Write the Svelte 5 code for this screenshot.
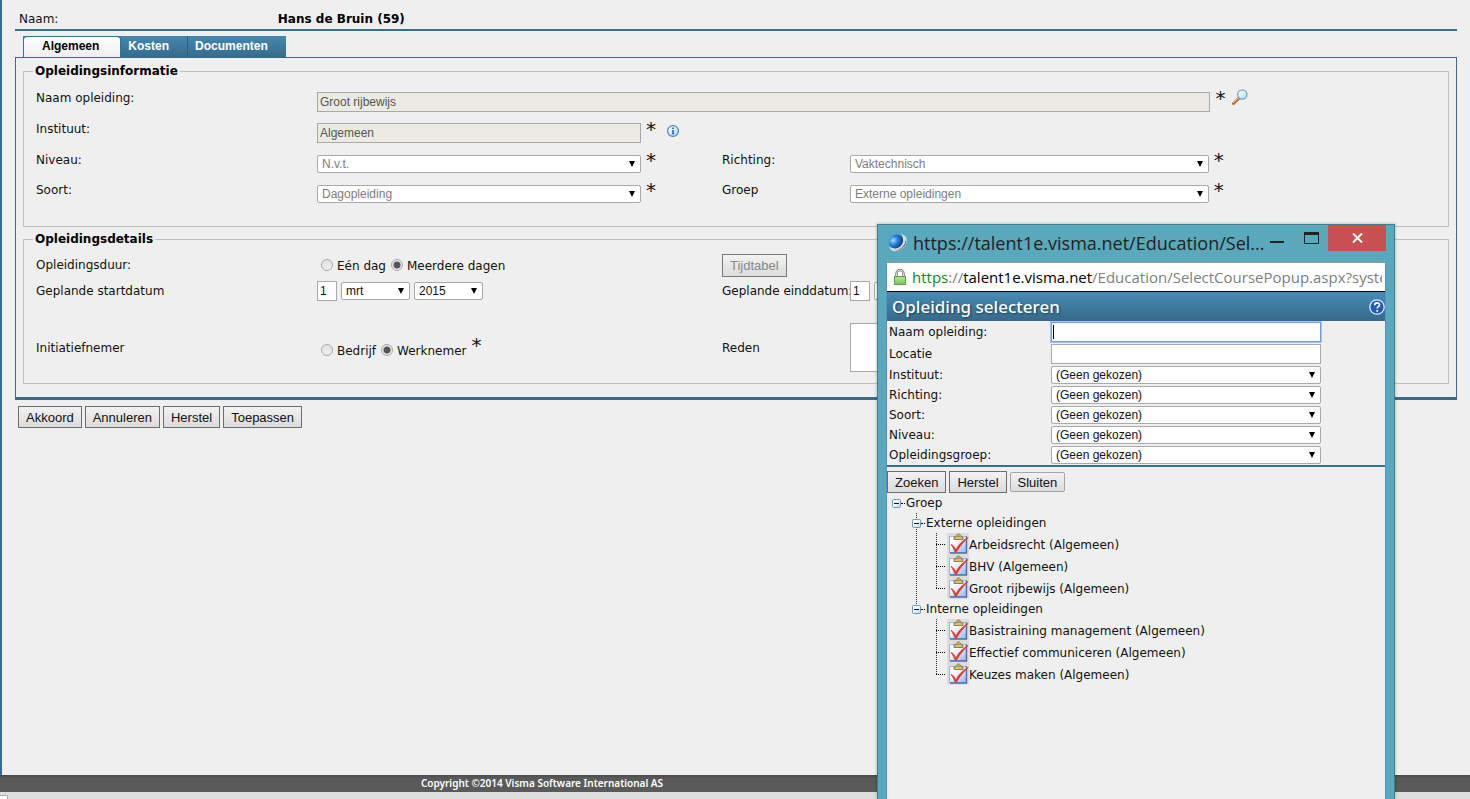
<script lang="ts">
  const tabs = ['Algemeen', 'Kosten', 'Documenten'];
  const filters = ['Instituut:', 'Richting:', 'Soort:', 'Niveau:', 'Opleidingsgroep:'];
  const groups = [
    { name: 'Externe opleidingen', items: ['Arbeidsrecht', 'BHV', 'Groot rijbewijs'] },
    { name: 'Interne opleidingen', items: ['Basistraining management', 'Effectief communiceren', 'Keuzes maken'] }
  ];

  let activeTab = 'Algemeen';
  let duration = 'meerdere';
  let initiator = 'werknemer';
  let open = true;
  let closed: Record<string, boolean> = {};

  function toggle(name: string) {
    closed = { ...closed, [name]: !closed[name] };
  }
</script>

{#snippet dropdown(id: string, value: string, label: string, disabled: boolean)}
  <span class="select">
    <select {id} {disabled} aria-label={label}>
      <option>{value}</option>
    </select>
  </span>
{/snippet}

{#snippet toggleIcon(collapsed: boolean)}
  <svg width="9" height="9" viewBox="0 0 9 9" aria-hidden="true">
    <rect x="0.5" y="0.5" width="8" height="8" rx="1" fill="url(#box)" stroke="#6f97c4" />
    <path d={collapsed ? 'M2 4.5h5M4.5 2v5' : 'M2 4.5h5'} stroke="#111" />
  </svg>
{/snippet}

<div class="page">
  <main>
    <header class="person">
      <span>Naam:</span>
      <strong>Hans de Bruin (59)</strong>
    </header>

    <nav class="tabs">
      {#each tabs as tab}
        <button type="button" class="tab" class:active={tab === activeTab} on:click={() => (activeTab = tab)}>{tab}</button>
      {/each}
    </nav>

    <section class="panel">
      <fieldset>
        <legend>Opleidingsinformatie</legend>
        <div class="grid info">
          <label for="course">Naam opleiding:</label>
          <div class="field wide">
            <input id="course" class="text" value="Groot rijbewijs" readonly />
            <span class="star">*</span>
            <button type="button" class="icon" aria-label="Opleiding zoeken">
              <svg width="16" height="16" viewBox="0 0 16 16">
                <path d="M1.5 14.5 7 9" stroke="#b8692f" stroke-width="3" stroke-linecap="round" />
                <path d="M1.3 13.6 6.3 8.8" stroke="#f6bf7c" stroke-width="1.2" stroke-linecap="round" />
                <circle cx="10.3" cy="5.5" r="4.6" fill="url(#lens)" stroke="#7d9fd3" stroke-width="1.3" />
              </svg>
            </button>
          </div>

          <label for="institute">Instituut:</label>
          <div class="field">
            <input id="institute" class="text" value="Algemeen" readonly />
            <span class="star">*</span>
            <button type="button" class="icon info-button" aria-label="Informatie">
              <svg width="12" height="12" viewBox="0 0 12 12">
                <circle cx="6" cy="6" r="5.4" fill="url(#lens)" stroke="#4483cc" stroke-width="1.2" />
                <path d="M6 2.4v1.6M6 5v4" fill="none" stroke="#3972b8" stroke-width="1.8" />
                <path d="M4.8 9h2.4" stroke="#3972b8" stroke-width="0.8" />
              </svg>
            </button>
          </div>

          <label class="first" for="level">Niveau:</label>
          <div class="field">{@render dropdown('level', 'N.v.t.', 'Niveau', true)}<span class="star">*</span></div>
          <label for="direction">Richting:</label>
          <div class="field right">{@render dropdown('direction', 'Vaktechnisch', 'Richting', true)}<span class="star">*</span></div>

          <label for="kind">Soort:</label>
          <div class="field">{@render dropdown('kind', 'Dagopleiding', 'Soort', true)}<span class="star">*</span></div>
          <label for="group">Groep</label>
          <div class="field right">{@render dropdown('group', 'Externe opleidingen', 'Groep', true)}<span class="star">*</span></div>
        </div>
      </fieldset>

      <fieldset>
        <legend>Opleidingsdetails</legend>
        <div class="grid details">
          <span>Opleidingsduur:</span>
          <div class="radios">
            <label><input type="radio" bind:group={duration} value="een" />Eén dag</label>
            <label><input type="radio" bind:group={duration} value="meerdere" />Meerdere dagen</label>
          </div>
          <div class="span"><button type="button" class="btn" disabled>Tijdtabel</button></div>

          <label for="start-day">Geplande startdatum</label>
          <div class="date">
            <input id="start-day" class="text" value="1" />
            {@render dropdown('start-month', 'mrt', 'Startmaand', false)}
            {@render dropdown('start-year', '2015', 'Startjaar', false)}
          </div>
          <label for="end-day">Geplande einddatum:</label>
          <div class="date">
            <input id="end-day" class="text" value="1" />
            {@render dropdown('end-month', 'mrt', 'Eindmaand', false)}
            {@render dropdown('end-year', '2015', 'Eindjaar', false)}
          </div>

          <span class="mid">Initiatiefnemer</span>
          <div class="radios mid">
            <label><input type="radio" bind:group={initiator} value="bedrijf" />Bedrijf</label>
            <label><input type="radio" bind:group={initiator} value="werknemer" />Werknemer</label>
            <span class="star">*</span>
          </div>
          <label class="mid" for="reason">Reden</label>
          <textarea id="reason"></textarea>
        </div>
      </fieldset>
    </section>

    <div class="actions">
      <button type="button" class="btn">Akkoord</button>
      <button type="button" class="btn">Annuleren</button>
      <button type="button" class="btn">Herstel</button>
      <button type="button" class="btn">Toepassen</button>
    </div>
  </main>

  <footer>Copyright ©2014 Visma Software International AS</footer>
  <div class="strip"><span></span></div>

  <!-- popup window -->
  <aside class="window">
    <div class="titlebar">
      <svg width="20" height="20" viewBox="0 0 20 20" aria-hidden="true">
        <path d="M13 1c5 1 7 5 5 10-2 5-8 8-13 7-2-1-3-2-4-4 5 2 10 1 13-4 2-4 1-7-1-9z" fill="#d3dbe0" />
        <path d="M18 6c1 6-4 12-12 12 7-1 11-5 12-12z" fill="#47616f" />
        <ellipse cx="8" cy="8.500" rx="7.5" ry="6.5" transform="rotate(-40 8 8.500)" fill="url(#globe)" />
      </svg>
      <span class="caption">https://talent1e.visma.net/Education/Sel...</span>
      <button type="button" class="win" aria-label="Minimaliseren">
        <svg width="15" height="12" viewBox="0 0 15 12"><path d="M0 10h14" stroke="#222" stroke-width="2" /></svg>
      </button>
      <button type="button" class="win" aria-label="Maximaliseren">
        <svg width="15" height="12" viewBox="0 0 15 12"><path d="M0.5 1v10.5h14V1" fill="none" stroke="#222" /><path d="M0 1.5h15" stroke="#222" stroke-width="3" /></svg>
      </button>
      <button type="button" class="win close" aria-label="Sluiten">
        <svg width="11" height="10" viewBox="0 0 11 10"><path d="M1 0.5l9 9M10 0.5l-9 9" stroke="#fff" stroke-width="2" /></svg>
      </button>
    </div>

    <div class="content">
      <div class="address">
        <svg width="12" height="16" viewBox="0 0 12 16" aria-hidden="true">
          <path d="M2.5 8V4.5a3.5 3.5 0 0 1 7 0V8" fill="none" stroke="#777" stroke-width="2.4" />
          <path d="M2.5 8V4.5a3.5 3.5 0 0 1 7 0V8" fill="none" stroke="#ddd" stroke-width="1" />
          <rect x="0.5" y="7.5" width="11" height="8" fill="url(#lock)" stroke="#5a9e42" />
        </svg>
        <span class="url"><b>https</b>://<i>talent1e.visma.net</i>/Education/SelectCoursePopup.aspx?system</span>
      </div>

      <div class="heading">
        <h1>Opleiding selecteren</h1>
        <button type="button" class="icon" aria-label="Help">
          <svg width="16" height="16" viewBox="0 0 16 16">
            <circle cx="8" cy="8" r="7.2" fill="#2259b5" stroke="#dfe9f5" stroke-width="1.3" />
            <path d="M5.7 6.2c0-3 4.8-3 4.8-.3 0 1.8-2.3 1.7-2.3 3.6M8.2 11v1.8" fill="none" stroke="#fff" stroke-width="1.7" />
          </svg>
        </button>
      </div>

      <form class="search">
        <label for="q-name">Naam opleiding:</label>
        <input id="q-name" class="text current" />
        <label for="q-place">Locatie</label>
        <input id="q-place" class="text" />
        {#each filters as filter, i}
          <label for="filter-{i}">{filter}</label>
          {@render dropdown(`filter-${i}`, '(Geen gekozen)', filter, false)}
        {/each}
      </form>

      <div class="buttons">
        <button type="button" class="btn">Zoeken</button>
        <button type="button" class="btn">Herstel</button>
        <button type="button" class="btn light">Sluiten</button>
      </div>

      <div class="tree">
        <button type="button" class="node" on:click={() => (open = !open)}>{@render toggleIcon(!open)}<span class="dash"></span>Groep</button>
        {#if open}
          <ul class="groups">
            {#each groups as group}
              <li>
                <button type="button" class="node" on:click={() => toggle(group.name)}>{@render toggleIcon(closed[group.name])}<span class="dash"></span>{group.name}</button>
                {#if !closed[group.name]}
                  <ul class="leaves">
                    {#each group.items as item}
                      <li class="leaf">
                        <span class="branch"><span></span></span>
                        <svg width="22" height="22" viewBox="0 0 22 22" aria-hidden="true">
                          <rect width="22" height="22" fill="#dedcd8" />
                          <rect x="2.5" y="3.5" width="17" height="16" fill="url(#sheet)" stroke="#9db6e2" />
                          <path d="M19.5 3.500v16.500H3" fill="none" stroke="#4a6fb5" stroke-width="1.4" />
                          <path d="M7 6.5V4h2c0-4 5-4 5 0h2v2.500z" fill="#d9c27c" stroke="#85713a" stroke-width="0.9" />
                          <path d="M10.5 3.200h2" stroke="#6b5a2c" />
                          <path d="M4 11.500c2.200.6 3.600 2.700 4.800 5.700C11.500 12 15 8 21 4.500 16.500 9 13 13 9.500 19H8C7 16 5.500 13.500 4 11.500z" fill="#dc3a2a" stroke="#dc3a2a" stroke-width="0.800" />
                        </svg>
                        <a href="#top">{item} (Algemeen)</a>
                      </li>
                    {/each}
                  </ul>
                {/if}
              </li>
            {/each}
          </ul>
        {/if}
      </div>
    </div>
  </aside>

  <svg class="defs" width="0" height="0" aria-hidden="true">
    <defs>
      <linearGradient id="box" x1="0" y1="0" x2="1" y2="1"><stop offset="0.3" stop-color="#fff" /><stop offset="1" stop-color="#c3d3e6" /></linearGradient>
      <linearGradient id="lens" x1="0" y1="0" x2="1" y2="1"><stop offset="0.2" stop-color="#f4fbff" /><stop offset="1" stop-color="#a4dcf7" /></linearGradient>
      <linearGradient id="sheet" x1="0" y1="0" x2="1" y2="1"><stop offset="0.3" stop-color="#fff" /><stop offset="1" stop-color="#8fb2ee" /></linearGradient>
      <linearGradient id="lock" x1="0" y1="0" x2="0" y2="1"><stop offset="0" stop-color="#b5e39a" /><stop offset="1" stop-color="#7fc65c" /></linearGradient>
      <radialGradient id="globe" cx="0.4" cy="0.3" r="0.8"><stop offset="0" stop-color="#a9dcff" /><stop offset="0.4" stop-color="#2583dc" /><stop offset="1" stop-color="#0a2a63" /></radialGradient>
    </defs>
  </svg>
</div>

<style>
  :global(body) { background: #efefef; }

  .page {
    position: relative; display: flex; flex-direction: column; min-height: 100vh; overflow: hidden;
    font-family: 'DejaVu Sans', Verdana, sans-serif; font-size: 12px; line-height: 20px; color: #111;
  }
  .page *, .page *::before, .page *::after { box-sizing: border-box; }
  button, input, select, textarea { margin: 0; font-family: 'Liberation Sans', Arial, sans-serif; font-size: 12px; }
  button { cursor: pointer; }
  .defs { position: absolute; }

  main { flex: 1; padding: 9px 13px 0; border-left: 2px solid #386c92; }

  .person { display: grid; grid-template-columns: 18% 1fr; height: 22px; padding-left: 4px; border-bottom: 2px solid #37718f; color: #111; }
  .person strong { color: #000; }

  .tabs { display: flex; width: fit-content; margin: 5px 0 0 8px; background: linear-gradient(#4488b0, #386b8a); }
  .tab { height: 21px; padding: 0 18px 2px 7px; border: 0; background: none; color: #fff; font-weight: bold; }
  .tab + .tab + .tab { border-left: 1px solid #2f607e; }
  .tab.active { padding: 0 21px 2px 18px; border: 1px solid #37718f; border-bottom: 0; border-radius: 4px 4px 0 0; background: linear-gradient(#fff, #efefef); color: #000; }

  .panel { display: flex; flex-direction: column; gap: 4px; padding: 5px 7px 13px; border: 1px solid #386c8c; border-bottom-width: 3px; }
  fieldset { min-width: 0; margin: 0; padding: 10px 0 16px 9px; border: 1px solid #bfbfbf; }
  fieldset + fieldset { padding: 9px 0 10px 9px; }
  legend { padding: 0 2px; line-height: 16px; margin-bottom: -1px; font-weight: bold; color: #000; }

  .grid { display: grid; grid-template-columns: minmax(0, 281fr) minmax(0, 405fr) minmax(0, 128fr) minmax(0, 598fr); padding-left: 3px; }
  .info { grid-template-rows: 31px 31px 30px 30px; }
  .details { grid-template-rows: 26px 41px 51px; white-space: nowrap; }
  .first { grid-column: 1; }

  .field { display: flex; align-items: flex-start; }
  .field .text { width: 80%; margin-top: 4px; }
  .field .select { width: 80%; margin-top: 5px; }
  .field.right .select { width: 60%; }
  .field.wide { grid-column: 2 / -1; }
  .field.wide .text { width: 79%; }
  .star { margin-left: 5px; font-size: 20px; line-height: 20px; }

  .text { height: 20px; padding: 0 2px; border: 1px solid #a9a9a9; border-radius: 0; background: #fff; color: #111; outline: 0; }
  .text:read-only { background: #ebebe4; color: #555; }

  .select { display: inline-grid; align-items: center; height: 18px; }
  .select select { grid-area: 1 / 1; width: 100%; height: 100%; padding: 0 16px 0 4px; border: 1px solid #a9a9a9; border-radius: 2px; background: #fff; color: #111; appearance: none; }
  .select select:disabled { color: #7d7d7d; opacity: 1; }
  .select::after { content: ''; grid-area: 1 / 1; justify-self: end; margin-right: 6px; border: solid transparent; border-width: 6px 3px 0; border-top-color: #000; pointer-events: none; }

  .icon { display: flex; margin: 1px 0 0 7px; padding: 0; border: 0; background: none; }
  .info-button { margin: 6px 0 0 11px; }

  .radios { display: flex; gap: 5px; padding: 1px 0 0 4px; }
  .radios label { display: flex; gap: 4px; }
  .radios input {
    width: 12px; height: 12px; margin-top: 3px; border: 1px solid #a8a8a8; border-radius: 50%;
    background: linear-gradient(#e2e2e2, #efefef); appearance: none;
  }
  .radios input:checked { background: radial-gradient(circle, #555 0 3px, #e6e6e6 4px); }
  .radios.mid { align-self: center; padding-top: 7px; }
  .radios.mid .star { margin: -6px 0 0; }
  .mid { align-self: center; }
  .span { grid-column: 3 / -1; margin-top: -1px; }

  .date { display: flex; gap: 4px; }
  .date .text { width: 20px; }
  .date .select { width: 69px; margin-top: 1px; }
  textarea { align-self: center; width: 60%; height: 49px; border: 1px solid #a9a9a9; background: #fff; resize: none; }

  .btn { height: 22px; padding: 0 7px; border: 1px solid #6d6d6d; border-radius: 0; background: linear-gradient(#f2f2f2, #dcdcdc); color: #111; font-size: 13px; }
  .btn:disabled { height: 23px; border-color: #7a7a7a; color: #888; }
  .btn.light { height: 20px; border-color: #a5a5a5; border-radius: 2px; }
  .actions { display: flex; gap: 3px; padding: 6px 3px; }

  footer { height: 17px; padding-right: 386px; background: linear-gradient(#4a4a4a, #5a5a5a 3px); color: #fff; font-family: 'Noto Sans', sans-serif; font-size: 10px; font-weight: 600; line-height: 16px; text-align: center; }
  .strip { height: 7px; padding-top: 3px; background: #dedede; }
  .strip span { display: block; width: 8px; height: 4px; border: 1px solid #aaa; border-width: 1px 1px 0 0; border-radius: 0 2px 0 0; background: #fff; }

  /* floats over the form, down to the bottom of the screen */
  .window { position: absolute; top: 224px; right: 75px; bottom: 0; display: flex; flex-direction: column; width: 518px; padding: 0 8px; border: 1px solid #43808f; border-bottom: 0; background: #5aa8bc; box-shadow: 0 0 3px rgba(0, 0, 0, 0.3); }
  .titlebar { display: flex; align-items: flex-start; height: 37px; }
  .titlebar > svg { margin: 8px 5px 0 2px; }
  .caption { flex: 1; width: 0; font-family: 'Open Sans', 'Segoe UI', sans-serif; font-size: 18px; line-height: 36px; white-space: nowrap; color: #222; }
  .win { display: flex; align-items: center; justify-content: center; width: 34px; height: 26px; padding: 0; border: 0; background: none; }
  .win.close { width: 58px; background: #c75050; }

  .content { flex: 1; border: 1px solid #5b8fc8; border-top-color: #999; border-bottom: 0; background: #efefef; }
  .address { display: flex; align-items: center; gap: 6px; height: 29px; padding: 0 3px 0 7px; border-bottom: 1px solid #000; background: #fff; }
  .address svg { flex: none; }
  .url { overflow: hidden; font-family: 'Open Sans', 'Segoe UI', sans-serif; font-size: 15px; white-space: nowrap; color: #808080; }
  .url b { font-weight: normal; color: #0b8a0b; }
  .url i { font-style: normal; color: #000; }

  .heading { display: flex; align-items: center; justify-content: space-between; height: 29px; padding: 0 0 0 5px; background: linear-gradient(#478cb5, #36698a); }
  .heading .icon { margin: 0; }
  h1 { margin: 0; font-family: 'Noto Sans', 'Trebuchet MS', sans-serif; font-size: 17px; font-weight: 500; color: #fff; text-shadow: 1px 1px 2px #1d3d52; }

  .search { display: grid; grid-template-columns: 162px 270px; grid-template-rows: 22px 22px repeat(5, 20px); align-items: center; padding: 0 2px; border-bottom: 2px solid #37718f; }
  .search .text { height: 20px; }
  .search .current { border-color: #6f9be0; box-shadow: 0 0 0 1px #a9c5f2; background: linear-gradient(#000, #000) 1px center / 1px 14px no-repeat #fff; }

  .buttons { display: flex; align-items: center; gap: 3px; padding-top: 4px; }

  .tree ul { margin: 0; padding: 0; list-style: none; }
  .node { display: flex; align-items: center; height: 20px; padding: 0 0 0 5px; border: 0; background: none; color: #111; font-family: inherit; }
  .dash { width: 4px; margin-right: 1px; border-top: 1px dotted #000; }
  .tree .groups { padding-left: 20px; }
  .groups > li { background: repeating-linear-gradient(#333 0 1px, transparent 1px 2px) 9px 0 / 1px 100% no-repeat; }
  .groups > li:last-child { background-size: 1px 6px; }
  .tree .leaves { padding-left: 29px; }
  .leaf { display: flex; height: 22px; }
  .leaf a { color: #111; line-height: 24px; text-decoration: none; }
  .branch { width: 11px; height: 22px; background: repeating-linear-gradient(#333 0 1px, transparent 1px 2px) 0 0 / 1px 100% no-repeat; }
  .leaf:last-child .branch { background-size: 1px 12px; }
  .branch span { display: block; width: 9px; margin-top: 11px; border-top: 1px dotted #000; }
</style>
